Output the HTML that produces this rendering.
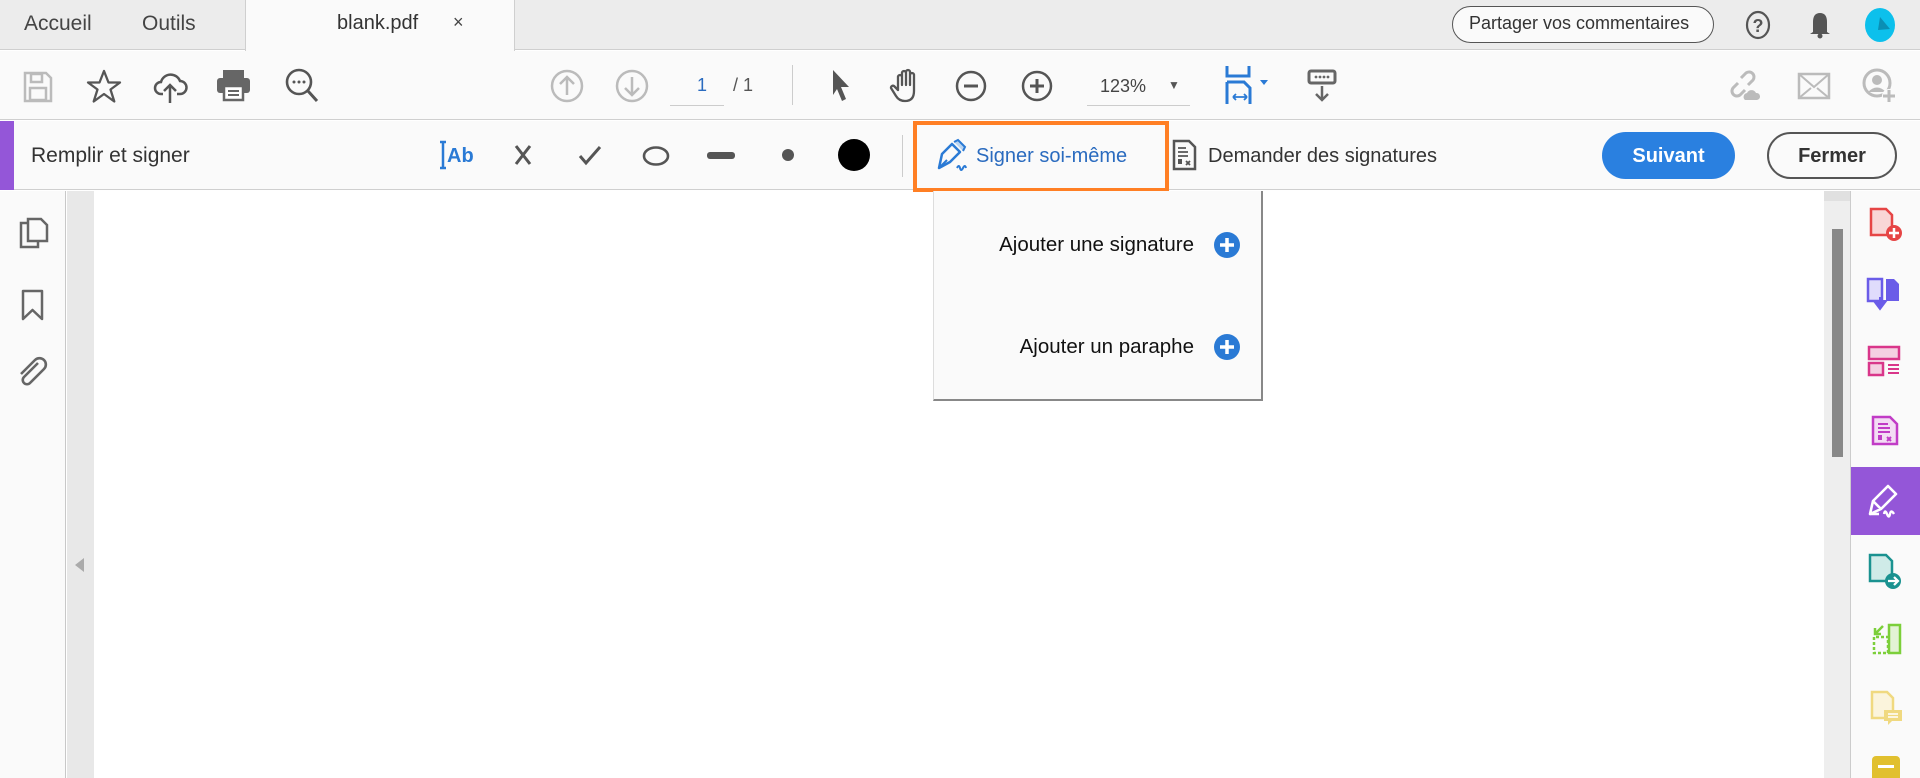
<!DOCTYPE html>
<html><head><meta charset="utf-8"><style>
*{margin:0;padding:0;box-sizing:border-box}
body{width:1920px;height:778px;overflow:hidden;background:#fff;font-family:"Liberation Sans",sans-serif;position:relative;color:#333}
.a{position:absolute}
.t{position:absolute;white-space:nowrap}
svg{position:absolute;overflow:visible}
</style></head><body>
<!-- tab bar -->
<div class="a" style="left:0;top:0;width:1920px;height:50px;background:#ececec;border-bottom:1px solid #cfcfcf"></div>
<div class="a" style="left:245px;top:0;width:270px;height:51px;background:#fafafa;border-left:1px solid #cfcfcf;border-right:1px solid #cfcfcf"></div>
<div class="t" style="left:24px;top:12px;font-size:21px;color:#444">Accueil</div>
<div class="t" style="left:142px;top:12px;font-size:21px;color:#444">Outils</div>
<div class="t" style="left:337px;top:12px;font-size:20px;color:#333">blank.pdf</div>
<div class="t" style="left:453px;top:12px;font-size:18px;color:#444">×</div>
<div class="a" style="left:1452px;top:6px;width:262px;height:37px;border:1.5px solid #555;border-radius:19px;background:#fafafa"></div>
<div class="t" style="left:1469px;top:13px;font-size:18px;color:#333">Partager vos commentaires</div>
<svg style="left:1745px;top:10px" width="26" height="30"><ellipse cx="13" cy="15" rx="11" ry="13" fill="none" stroke="#555" stroke-width="2.2"/><text x="13" y="22" font-size="18" font-weight="bold" fill="#555" text-anchor="middle" font-family="Liberation Sans">?</text></svg>
<svg style="left:1808px;top:8px" width="24" height="32"><path d="M12 2v3M5 24V14q0-9 7-9t7 9v10l3 2H2z" fill="#555"/><circle cx="12" cy="28" r="2.5" fill="#555"/></svg>
<svg style="left:1864px;top:7px" width="32" height="36"><ellipse cx="16" cy="18" rx="15" ry="17" fill="#0cc0ec"/><path d="M16 10L26 22 14 23z" fill="#0a8fb5"/></svg>
<!-- toolbar -->
<div class="a" style="left:0;top:51px;width:1920px;height:69px;background:#fafafa;border-bottom:1px solid #cfcfcf"></div>
<svg style="left:23px;top:71px" width="30" height="32"><path d="M2 2h21l5 5v23H2z" fill="none" stroke="#bbb" stroke-width="2.5"/><rect x="8" y="3" width="11" height="8" fill="none" stroke="#bbb" stroke-width="2.5"/><rect x="7" y="17" width="16" height="12" fill="none" stroke="#bbb" stroke-width="2.5"/></svg>
<svg style="left:86px;top:69px" width="36" height="34"><path d="M18 2l4.5 11.5H34l-9.5 7 3.8 12L18 25l-10.3 7.5 3.8-12-9.5-7h11.5z" fill="none" stroke="#555" stroke-width="2.3" stroke-linejoin="round"/></svg>
<svg style="left:153px;top:70px" width="34" height="34"><path d="M10 24H8a6 6 0 0 1 0-12 10 10 0 0 1 19-1 6.5 6.5 0 0 1 0 13h-3" fill="none" stroke="#555" stroke-width="2.5"/><path d="M17 33V15M11 21l6-6 6 6" fill="none" stroke="#555" stroke-width="2.5"/></svg>
<svg style="left:216px;top:69px" width="35" height="32"><rect x="7" y="1" width="21" height="8" fill="#666"/><rect x="1" y="9" width="33" height="15" rx="3" fill="#666"/><rect x="8" y="17" width="19" height="14" fill="#fff" stroke="#666" stroke-width="2.5"/><path d="M12 22h11M12 26h11" stroke="#666" stroke-width="2"/></svg>
<svg style="left:285px;top:68px" width="34" height="36"><circle cx="14" cy="14" r="12" fill="none" stroke="#555" stroke-width="2.6"/><path d="M23 23l9 10" stroke="#555" stroke-width="3"/><circle cx="9" cy="14" r="1.5" fill="#555"/><circle cx="14" cy="14" r="1.5" fill="#555"/><circle cx="19" cy="14" r="1.5" fill="#555"/></svg>
<svg style="left:550px;top:69px" width="34" height="34"><circle cx="17" cy="17" r="15" fill="none" stroke="#bbb" stroke-width="2.5"/><path d="M17 26V9M10 15l7-7 7 7" fill="none" stroke="#bbb" stroke-width="2.5"/></svg>
<svg style="left:615px;top:69px" width="34" height="34"><circle cx="17" cy="17" r="15" fill="none" stroke="#bbb" stroke-width="2.5"/><path d="M17 8v17M10 19l7 7 7-7" fill="none" stroke="#bbb" stroke-width="2.5"/></svg>
<div class="t" style="left:697px;top:75px;font-size:18px;color:#2a6bbf">1</div>
<div class="a" style="left:670px;top:105px;width:54px;height:1px;background:#ccc"></div>
<div class="t" style="left:733px;top:75px;font-size:18px;color:#555">/ 1</div>
<div class="a" style="left:792px;top:65px;width:1px;height:40px;background:#ccc"></div>
<svg style="left:830px;top:68px" width="22" height="34"><path d="M3 2l16 17h-8l5 12-4 2-5-12-4 6z" fill="#555"/></svg>
<svg style="left:890px;top:68px" width="32" height="36"><path d="M8 22V9a2 2 0 0 1 4 0v8V5a2 2 0 0 1 4 0v12V4a2 2 0 0 1 4 0v13V7a2 2 0 0 1 4 0v16q0 10-9 10-6 0-9-5l-5-8a2 2 0 0 1 3-2z" fill="none" stroke="#555" stroke-width="2.3" stroke-linejoin="round"/></svg>
<svg style="left:955px;top:70px" width="34" height="34"><circle cx="16" cy="16" r="14" fill="none" stroke="#555" stroke-width="2.5"/><path d="M9 16h14" stroke="#555" stroke-width="3"/></svg>
<svg style="left:1021px;top:70px" width="34" height="34"><circle cx="16" cy="16" r="14" fill="none" stroke="#555" stroke-width="2.5"/><path d="M9 16h14M16 9v14" stroke="#555" stroke-width="3"/></svg>
<div class="t" style="left:1100px;top:76px;font-size:18px;color:#444">123%</div>
<div class="t" style="left:1168px;top:78px;font-size:12px;color:#555">▼</div>
<div class="a" style="left:1087px;top:105px;width:103px;height:1px;background:#ccc"></div>
<svg style="left:1225px;top:66px" width="45" height="38"><path d="M2 0v10h22V0" fill="none" stroke="#2a7ad5" stroke-width="3"/><path d="M2 16v22M2 16h17l6 6v16" fill="none" stroke="#2a7ad5" stroke-width="3"/><path d="M8 31h14M8 31l3-3M8 31l3 3M22 31l-3-3M22 31l-3 3" stroke="#2a7ad5" stroke-width="1.8" fill="none"/><path d="M35 14h8l-4 5z" fill="#2a7ad5"/></svg>
<svg style="left:1307px;top:69px" width="30" height="34"><rect x="2" y="2" width="26" height="12" rx="2" fill="none" stroke="#666" stroke-width="3"/><circle cx="9" cy="8" r="1.4" fill="#666"/><circle cx="13" cy="8" r="1.4" fill="#666"/><circle cx="17" cy="8" r="1.4" fill="#666"/><circle cx="21" cy="8" r="1.4" fill="#666"/><path d="M15 17v14M9 25l6 6 6-6" fill="none" stroke="#666" stroke-width="2.5"/></svg>
<svg style="left:1727px;top:68px" width="36" height="36"><path d="M14 10l5-5a5 5 0 0 1 7 7l-5 5M18 22l-5 5a5 5 0 0 1-7-7l5-5" fill="none" stroke="#bbb" stroke-width="3"/><path d="M18 32a4 4 0 0 1 2-7 5 5 0 0 1 9 0 3.5 3.5 0 0 1 1 7z" fill="#bbb"/></svg>
<svg style="left:1797px;top:72px" width="34" height="28"><rect x="2" y="2" width="30" height="24" fill="none" stroke="#bbb" stroke-width="2.5"/><path d="M2 2l15 13L32 2M2 26l12-10M32 26L20 16" fill="none" stroke="#bbb" stroke-width="2"/></svg>
<svg style="left:1861px;top:68px" width="36" height="36"><circle cx="16" cy="15" r="13" fill="none" stroke="#bbb" stroke-width="3"/><circle cx="16" cy="12" r="5" fill="#bbb"/><path d="M7 24q9-9 18 0" fill="#bbb"/><circle cx="28" cy="28" r="7" fill="#fafafa"/><path d="M28 22v12M22 28h12" stroke="#bbb" stroke-width="3"/></svg>
<!-- fill & sign bar -->
<div class="a" style="left:0;top:121px;width:1920px;height:69px;background:#fafafa;border-bottom:1px solid #cfcfcf"></div>
<div class="a" style="left:0;top:121px;width:14px;height:69px;background:#9456d8"></div>
<div class="t" style="left:31px;top:144px;font-size:21px;color:#333">Remplir et signer</div>
<svg style="left:438px;top:140px" width="40" height="30"><path d="M2 2h6M5 2v26M2 28h6" stroke="#2a7ad5" stroke-width="2.5"/><text x="9" y="22" font-size="20" font-weight="bold" fill="#2a7ad5" font-family="Liberation Sans">Ab</text></svg>
<svg style="left:514px;top:144px" width="18" height="22"><path d="M2 2l14 18M16 2L2 20" stroke="#555" stroke-width="3"/></svg>
<svg style="left:578px;top:145px" width="24" height="20"><path d="M2 11l6 7L22 2" fill="none" stroke="#555" stroke-width="3"/></svg>
<svg style="left:641px;top:145px" width="30" height="22"><ellipse cx="15" cy="11" rx="12" ry="8.5" fill="none" stroke="#555" stroke-width="2.6"/></svg>
<div class="a" style="left:707px;top:152px;width:28px;height:7px;background:#555;border-radius:3px"></div>
<div class="a" style="left:782px;top:149px;width:12px;height:12px;background:#555;border-radius:50%"></div>
<div class="a" style="left:838px;top:139px;width:32px;height:32px;background:#000;border-radius:50%"></div>
<div class="a" style="left:902px;top:135px;width:1px;height:42px;background:#ccc"></div>
<div class="a" style="left:913px;top:121px;width:256px;height:71px;border:4px solid #ff7f24"></div>
<svg style="left:935px;top:138px" width="36" height="34"><path d="M4 30l3-14 10-10 8 8-10 10z" fill="none" stroke="#2a7ad5" stroke-width="2.5" stroke-linejoin="round"/><path d="M19 4l4-2 7 7-2 4" fill="#b8d4f2" stroke="#2a7ad5" stroke-width="2"/><path d="M4 30l8-8" stroke="#2a7ad5" stroke-width="2"/><path d="M22 30q2-4 3 0t3 0 3 0" fill="none" stroke="#2a7ad5" stroke-width="2"/></svg>
<div class="t" style="left:976px;top:145px;font-size:20px;color:#2a6bbf">Signer soi-même</div>
<svg style="left:1172px;top:139px" width="26" height="32"><path d="M2 2h15l6 6v22H2z" fill="none" stroke="#555" stroke-width="2.5"/><path d="M6 9h8M6 13h10M6 17h10" stroke="#555" stroke-width="1.8"/><rect x="6" y="20" width="4" height="5" fill="#555"/><path d="M14 22l4 4M18 22l-4 4" stroke="#555" stroke-width="1.8"/></svg>
<div class="t" style="left:1208px;top:145px;font-size:20px;color:#333">Demander des signatures</div>
<div class="a" style="left:1602px;top:132px;width:133px;height:47px;background:#2a80e0;border-radius:24px"></div>
<div class="t" style="left:1602px;top:145px;width:133px;text-align:center;font-size:20px;font-weight:bold;color:#fff">Suivant</div>
<div class="a" style="left:1767px;top:132px;width:130px;height:47px;border:2px solid #555;border-radius:24px;background:#fafafa"></div>
<div class="t" style="left:1767px;top:145px;width:130px;text-align:center;font-size:20px;font-weight:bold;color:#333">Fermer</div>
<!-- left panel -->
<div class="a" style="left:0;top:191px;width:66px;height:587px;background:#fafafa;border-right:1px solid #c8c8c8"></div>
<div class="a" style="left:67px;top:191px;width:27px;height:587px;background:#e8e8e8"></div>
<svg style="left:19px;top:217px" width="32" height="34"><path d="M9 6H2v24h17v-6" fill="none" stroke="#666" stroke-width="2.5"/><path d="M9 2h13l6 6v16H9z" fill="none" stroke="#666" stroke-width="2.5"/></svg>
<svg style="left:21px;top:289px" width="24" height="32"><path d="M2 2h19v28l-9.5-9L2 30z" fill="none" stroke="#666" stroke-width="2.5" stroke-linejoin="round"/></svg>
<svg style="left:16px;top:355px" width="32" height="30"><path d="M22 8L8 22a4 4 0 0 0 6 6L28 14a6 6 0 0 0-9-9L5 19" fill="none" stroke="#666" stroke-width="2.6"/></svg>
<svg style="left:75px;top:558px" width="10" height="14"><path d="M9 0v14L0 7z" fill="#aaa"/></svg>
<!-- right scrollbar & panel -->
<div class="a" style="left:1824px;top:191px;width:26px;height:587px;background:#eeeeee"></div>
<div class="a" style="left:1824px;top:191px;width:26px;height:10px;background:#e0e0e0"></div>
<div class="a" style="left:1832px;top:229px;width:11px;height:228px;background:#888"></div>
<div class="a" style="left:1850px;top:191px;width:70px;height:587px;background:#fafafa;border-left:1px solid #ccc"></div>
<div class="a" style="left:1851px;top:467px;width:69px;height:68px;background:#9456d8"></div>
<svg style="left:1869px;top:207px" width="34" height="36"><path d="M2 2h15l6 6v20H2z" fill="#f9d6d6" stroke="#e64545" stroke-width="2.5"/><circle cx="25" cy="26" r="8" fill="#e64545"/><path d="M25 21v10M20 26h10" stroke="#fff" stroke-width="2.5"/></svg>
<svg style="left:1866px;top:277px" width="36" height="36"><path d="M2 2h14v22H2z" fill="#e0dcfc" stroke="#6a5ce8" stroke-width="2.5"/><path d="M20 2h8l5 5v17H20z" fill="#6a5ce8"/><path d="M14 20v8M8 24l6 8 6-8z" fill="#6a5ce8" stroke="#6a5ce8" stroke-width="2"/></svg>
<svg style="left:1867px;top:345px" width="36" height="32"><rect x="2" y="2" width="30" height="12" fill="#f4d0e2" stroke="#d9368a" stroke-width="2.5"/><rect x="2" y="18" width="14" height="12" fill="#f4d0e2" stroke="#d9368a" stroke-width="2.5"/><path d="M21 20h11M21 24h11M21 28h11" stroke="#d9368a" stroke-width="2"/></svg>
<svg style="left:1871px;top:415px" width="30" height="32"><path d="M2 2h17l7 7v20H2z" fill="#f3dcf4" stroke="#c13cc6" stroke-width="2.5"/><path d="M7 9h10M7 13h12M7 17h12" stroke="#c13cc6" stroke-width="2"/><rect x="7" y="20" width="4" height="5" fill="#c13cc6"/><path d="M16 22l4 4M20 22l-4 4" stroke="#c13cc6" stroke-width="2"/></svg>
<svg style="left:1867px;top:484px" width="36" height="34"><path d="M3 30l3-13 15-15 8 8-15 15zM6 17l8 8" fill="none" stroke="#fff" stroke-width="2.6" stroke-linejoin="round"/><path d="M3 30h9M17 30q1-5 3 0t3 0 4 0" fill="none" stroke="#fff" stroke-width="2.4"/></svg>
<svg style="left:1868px;top:553px" width="36" height="38"><path d="M2 2h16l6 6v20H2z" fill="#cfebe8" stroke="#1a9290" stroke-width="2.5"/><circle cx="25" cy="28" r="8" fill="#1a9290"/><path d="M20 28h9M26 24l4 4-4 4" fill="none" stroke="#fff" stroke-width="2.2"/></svg>
<svg style="left:1870px;top:623px" width="32" height="32"><path d="M4 14v16h14V14z" fill="none" stroke="#7ccf3a" stroke-width="2.5" stroke-dasharray="3 2"/><rect x="19" y="2" width="11" height="28" fill="#e3f3d5" stroke="#7ccf3a" stroke-width="2.5"/><path d="M13 3L5 11M5 5v6h6" fill="none" stroke="#7ccf3a" stroke-width="2.5"/></svg>
<svg style="left:1870px;top:690px" width="34" height="38"><path d="M2 2h15l6 6v20H2z" fill="#fbf4dc" stroke="#f0d980" stroke-width="2.5"/><path d="M14 20h18v11H22l-4 4v-4h-4z" fill="#f0d980"/><path d="M18 24h10M18 27h10" stroke="#fff" stroke-width="1.5"/></svg>
<div class="a" style="left:1872px;top:756px;width:28px;height:22px;background:#e1c02e;border-radius:4px 4px 0 0"></div>
<div class="a" style="left:1878px;top:765px;width:16px;height:3px;background:#fff"></div>
<!-- dropdown -->
<div class="a" style="left:933px;top:191px;width:330px;height:210px;background:#fafafa;border:1px solid #ddd;border-right:2px solid #888;border-bottom:2px solid #888;border-top:none"></div>
<div class="t" style="left:903px;top:233px;width:291px;text-align:right;font-size:20.5px;color:#111">Ajouter une signature</div>
<svg style="left:1214px;top:232px" width="26" height="26"><circle cx="13" cy="13" r="13" fill="#2a7ad5"/><path d="M13 6v14M6 13h14" stroke="#fff" stroke-width="3.5"/></svg>
<div class="t" style="left:903px;top:335px;width:291px;text-align:right;font-size:20.5px;color:#111">Ajouter un paraphe</div>
<svg style="left:1214px;top:334px" width="26" height="26"><circle cx="13" cy="13" r="13" fill="#2a7ad5"/><path d="M13 6v14M6 13h14" stroke="#fff" stroke-width="3.5"/></svg>
</body></html>
